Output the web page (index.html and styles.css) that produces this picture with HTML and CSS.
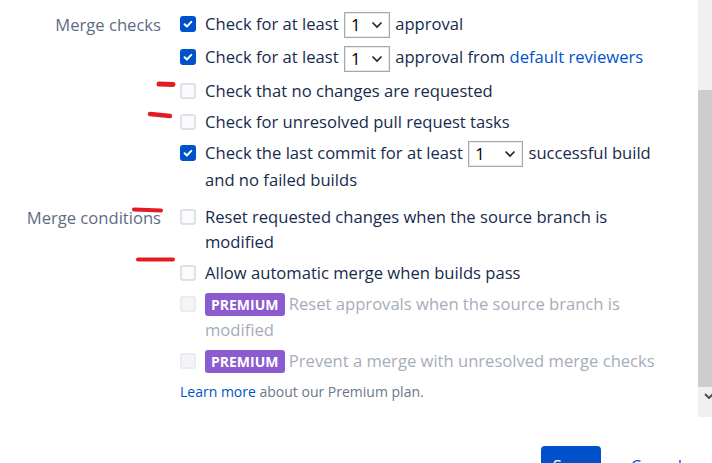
FILE: index.html
```html
<!DOCTYPE html>
<html lang="en">
<head>
<meta charset="utf-8">
<title>Merge settings</title>
<link rel="stylesheet" href="styles.css">
</head>
<body>
<div class="page">
  <div class="scroll-area">
    <div class="content">
      <section class="field">
        <div class="field-label">Merge checks</div>
        <div class="field-options">
          <div class="option">
            <span class="cb cb-checked"><svg viewBox="0 0 16 16" width="16" height="16"><path d="M4.6 8.2l2.3 2.3 4.4-4.6" fill="none" stroke="#fff" stroke-width="2" stroke-linecap="round" stroke-linejoin="round"/></svg></span>
            <span class="opt-text">Check for at least <span class="select select-sm"><span class="select-value">1</span><svg class="chev" viewBox="0 0 12 8" width="12" height="8"><path d="M1.5 1.5l4.5 4.5 4.5-4.5" fill="none" stroke="#222" stroke-width="1.6"/></svg></span> approval</span>
          </div>
          <div class="option">
            <span class="cb cb-checked"><svg viewBox="0 0 16 16" width="16" height="16"><path d="M4.6 8.2l2.3 2.3 4.4-4.6" fill="none" stroke="#fff" stroke-width="2" stroke-linecap="round" stroke-linejoin="round"/></svg></span>
            <span class="opt-text">Check for at least <span class="select select-sm"><span class="select-value">1</span><svg class="chev" viewBox="0 0 12 8" width="12" height="8"><path d="M1.5 1.5l4.5 4.5 4.5-4.5" fill="none" stroke="#222" stroke-width="1.6"/></svg></span> approval from <a class="link" href="#">default reviewers</a></span>
          </div>
          <div class="option">
            <span class="cb"></span>
            <span class="opt-text">Check that no changes are requested</span>
          </div>
          <div class="option">
            <span class="cb"></span>
            <span class="opt-text">Check for unresolved pull request tasks</span>
          </div>
          <div class="option">
            <span class="cb cb-checked"><svg viewBox="0 0 16 16" width="16" height="16"><path d="M4.6 8.2l2.3 2.3 4.4-4.6" fill="none" stroke="#fff" stroke-width="2" stroke-linecap="round" stroke-linejoin="round"/></svg></span>
            <span class="opt-text">Check the last commit for at least <span class="select select-md"><span class="select-value">1</span><svg class="chev" viewBox="0 0 12 8" width="12" height="8"><path d="M1.5 1.5l4.5 4.5 4.5-4.5" fill="none" stroke="#222" stroke-width="1.6"/></svg></span> successful build and no failed builds</span>
          </div>
        </div>
      </section>

      <section class="field field-conditions">
        <div class="field-label">Merge conditions</div>
        <div class="field-options">
          <div class="option">
            <span class="cb"></span>
            <span class="opt-text">Reset requested changes when the source branch is modified</span>
          </div>
          <div class="option">
            <span class="cb"></span>
            <span class="opt-text">Allow automatic merge when builds pass</span>
          </div>
          <div class="option option-disabled">
            <span class="cb cb-disabled"></span>
            <span class="opt-text"><span class="lozenge">PREMIUM</span> Reset approvals when the source branch is modified</span>
          </div>
          <div class="option option-disabled">
            <span class="cb cb-disabled"></span>
            <span class="opt-text"><span class="lozenge">PREMIUM</span> Prevent a merge with unresolved merge checks</span>
          </div>
          <p class="hint"><a class="link" href="#">Learn more</a> about our Premium plan.</p>
        </div>
      </section>
    </div>

    <div class="scrollbar">
      <div class="sb-track"></div>
      <div class="sb-thumb"></div>
      <div class="sb-button">
        <svg viewBox="0 0 10 6" width="10" height="6"><path d="M1 1l4 4 4-4" fill="none" stroke="#505050" stroke-width="2"/></svg>
      </div>
    </div>
  </div>

  <footer class="footer">
    <button class="btn btn-primary" type="button">Save</button>
    <a class="btn btn-link" href="#">Cancel</a>
  </footer>

  <!-- hand-drawn red marker strokes over the form -->
  <svg class="marks" viewBox="0 0 712 463" width="712" height="463">
    <g fill="none" stroke="#e31b23" stroke-linecap="round">
      <path d="M159 84 L173 84.5" stroke-width="5"/>
      <path d="M150 114 L160 115 L170 116" stroke-width="4.5"/>
      <path d="M134 209.5 L161 210.5" stroke-width="4"/>
      <path d="M138 259.5 L173 259.5" stroke-width="4"/>
    </g>
  </svg>
</div>
</body>
</html>
```

FILE: styles.css
```css
html, body {
  margin: 0;
  padding: 0;
  background: #fff;
}

body {
  width: 712px;
  height: 463px;
  overflow: hidden;
  font-family: "Open Sans", "Noto Sans", Arial, sans-serif;
  font-size: 16.6px;
  color: #172b4d;
}

.page {
  position: relative;
  width: 712px;
  height: 463px;
}

/* scrolling body of the dialog */
.scroll-area {
  display: flex;
  height: 417px;
  width: 740px;
}

.content {
  flex: none;
  width: 698px;
  padding-top: 10.5px;
  box-sizing: border-box;
}

.field {
  display: grid;
  grid-template-columns: 161px 1fr;
  column-gap: 19px;
}

.field-conditions {
  margin-top: 12px;
}

.field-label {
  text-align: right;
  color: #5e6c84;
  line-height: 27px;
  white-space: nowrap;
}

.field-options {
  display: flex;
  flex-direction: column;
  gap: 6px;
  padding-right: 40px;
}

.option {
  display: flex;
  align-items: flex-start;
  gap: 9px;
  line-height: 25px;
}

.opt-text {
  flex: 1;
}

/* checkboxes */
.cb {
  flex: none;
  box-sizing: border-box;
  width: 16px;
  height: 16px;
  margin-top: 5px;
  border: 2px solid #dfe1e6;
  border-radius: 3px;
  background: #fafbfc;
}

.cb-checked {
  border: none;
  background: #0052cc;
}

.cb-checked svg {
  display: block;
}

.cb-disabled {
  border-color: #ebecf0;
  background: #f4f5f7;
}

/* native-looking dropdowns */
.select {
  display: inline-flex;
  align-items: center;
  justify-content: space-between;
  box-sizing: border-box;
  height: 26px;
  margin: 0 1px;
  padding: 0 6px 0 6px;
  vertical-align: middle;
  border: 1px solid #a8a8a8;
  box-shadow: inset 0 0 0 1px #e8e8e8;
  background: #fff;
  color: #000;
  line-height: 24px;
}

.select-sm { width: 46px; }
.select-md { width: 55px; }

.chev {
  display: block;
}

.link {
  color: #0052cc;
  text-decoration: none;
}

/* premium rows */
.option-disabled .opt-text {
  color: #a5adba;
}

.lozenge {
  display: inline-block;
  box-sizing: border-box;
  height: 23px;
  padding: 0 6px;
  border-radius: 3px;
  background: #8b5bcf;
  color: #fff;
  font-size: 14px;
  font-weight: 700;
  line-height: 23px;
  vertical-align: middle;
  position: relative;
  top: -1px;
}

.hint {
  margin: 2px 0 0;
  font-size: 14px;
  line-height: 20px;
  color: #6b778c;
}

/* scrollbar of the dialog body */
.scrollbar {
  flex: none;
  width: 21px;
  display: flex;
  flex-direction: column;
  background: #f0f0f0;
}

.sb-track {
  height: 90px;
}

.sb-thumb {
  flex: 1;
  background: #cdcdcd;
}

.sb-button {
  height: 30px;
  display: flex;
  justify-content: center;
  padding-top: 6px;
  box-sizing: border-box;
}

.sb-button svg {
  display: block;
}

/* dialog footer */
.footer {
  display: flex;
  justify-content: flex-end;
  align-items: flex-start;
  gap: 18px;
  padding: 29px 18px 0 0;
}

.btn {
  box-sizing: border-box;
  height: 40px;
  font-family: inherit;
  font-size: 16.6px;
  font-weight: 500;
  line-height: 40px;
  border: none;
  border-radius: 4px;
  text-decoration: none;
}

.btn-primary {
  width: 60px;
  padding: 0;
  background: #0052cc;
  color: #fff;
}

.btn-link {
  padding: 0 12px;
  color: #0052cc;
}

.marks {
  position: absolute;
  left: 0;
  top: 0;
  pointer-events: none;
}
```
